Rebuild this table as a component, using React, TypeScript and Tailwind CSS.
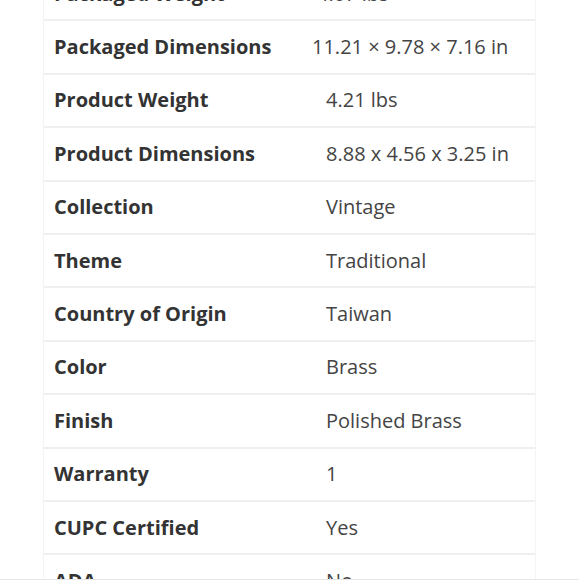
const rows: { label: string; value: string; indent: string }[] = [
  { label: 'Packaged Weight', value: '4.07 lbs', indent: 'pl-[30px]' },
  { label: 'Packaged Dimensions', value: '11.21 × 9.78 × 7.16 in', indent: 'pl-[25px]' },
  { label: 'Product Weight', value: '4.21 lbs', indent: 'pl-[39px]' },
  { label: 'Product Dimensions', value: '8.88 x 4.56 x 3.25 in', indent: 'pl-[39px]' },
  { label: 'Collection', value: 'Vintage', indent: 'pl-[39px]' },
  { label: 'Theme', value: 'Traditional', indent: 'pl-[39px]' },
  { label: 'Country of Origin', value: 'Taiwan', indent: 'pl-[39px]' },
  { label: 'Color', value: 'Brass', indent: 'pl-[39px]' },
  { label: 'Finish', value: 'Polished Brass', indent: 'pl-[39px]' },
  { label: 'Warranty', value: '1', indent: 'pl-[39px]' },
  { label: 'CUPC Certified', value: 'Yes', indent: 'pl-[39px]' },
  { label: 'ADA', value: 'No', indent: 'pl-[39px]' },
]

const SpecRow = ({ label, value, indent }: { label: string; value: string; indent: string }) => {
  return (
    <div className="flex h-[53.4px] items-center border-b-2 border-[#efefef]">
      <div className="w-[243px] shrink-0 pl-[10px] text-[20px] font-bold text-[#333]">{label}</div>
      <div className={`${indent} text-[20px] text-[#444]`}>{value}</div>
    </div>
  )
}

export default function App() {
  return (
    <div
      className="h-[580px] overflow-hidden border-b border-[#e6e6e6] bg-white"
      style={{ fontFamily: '"Open Sans", "Noto Sans", sans-serif' }}
    >
      <div className="mx-[43px] mt-[-32px] w-[493px] border-x border-[#f4f4f4]">
        {rows.map((r) => (
          <SpecRow key={r.label} {...r} />
        ))}
      </div>
    </div>
  )
}
